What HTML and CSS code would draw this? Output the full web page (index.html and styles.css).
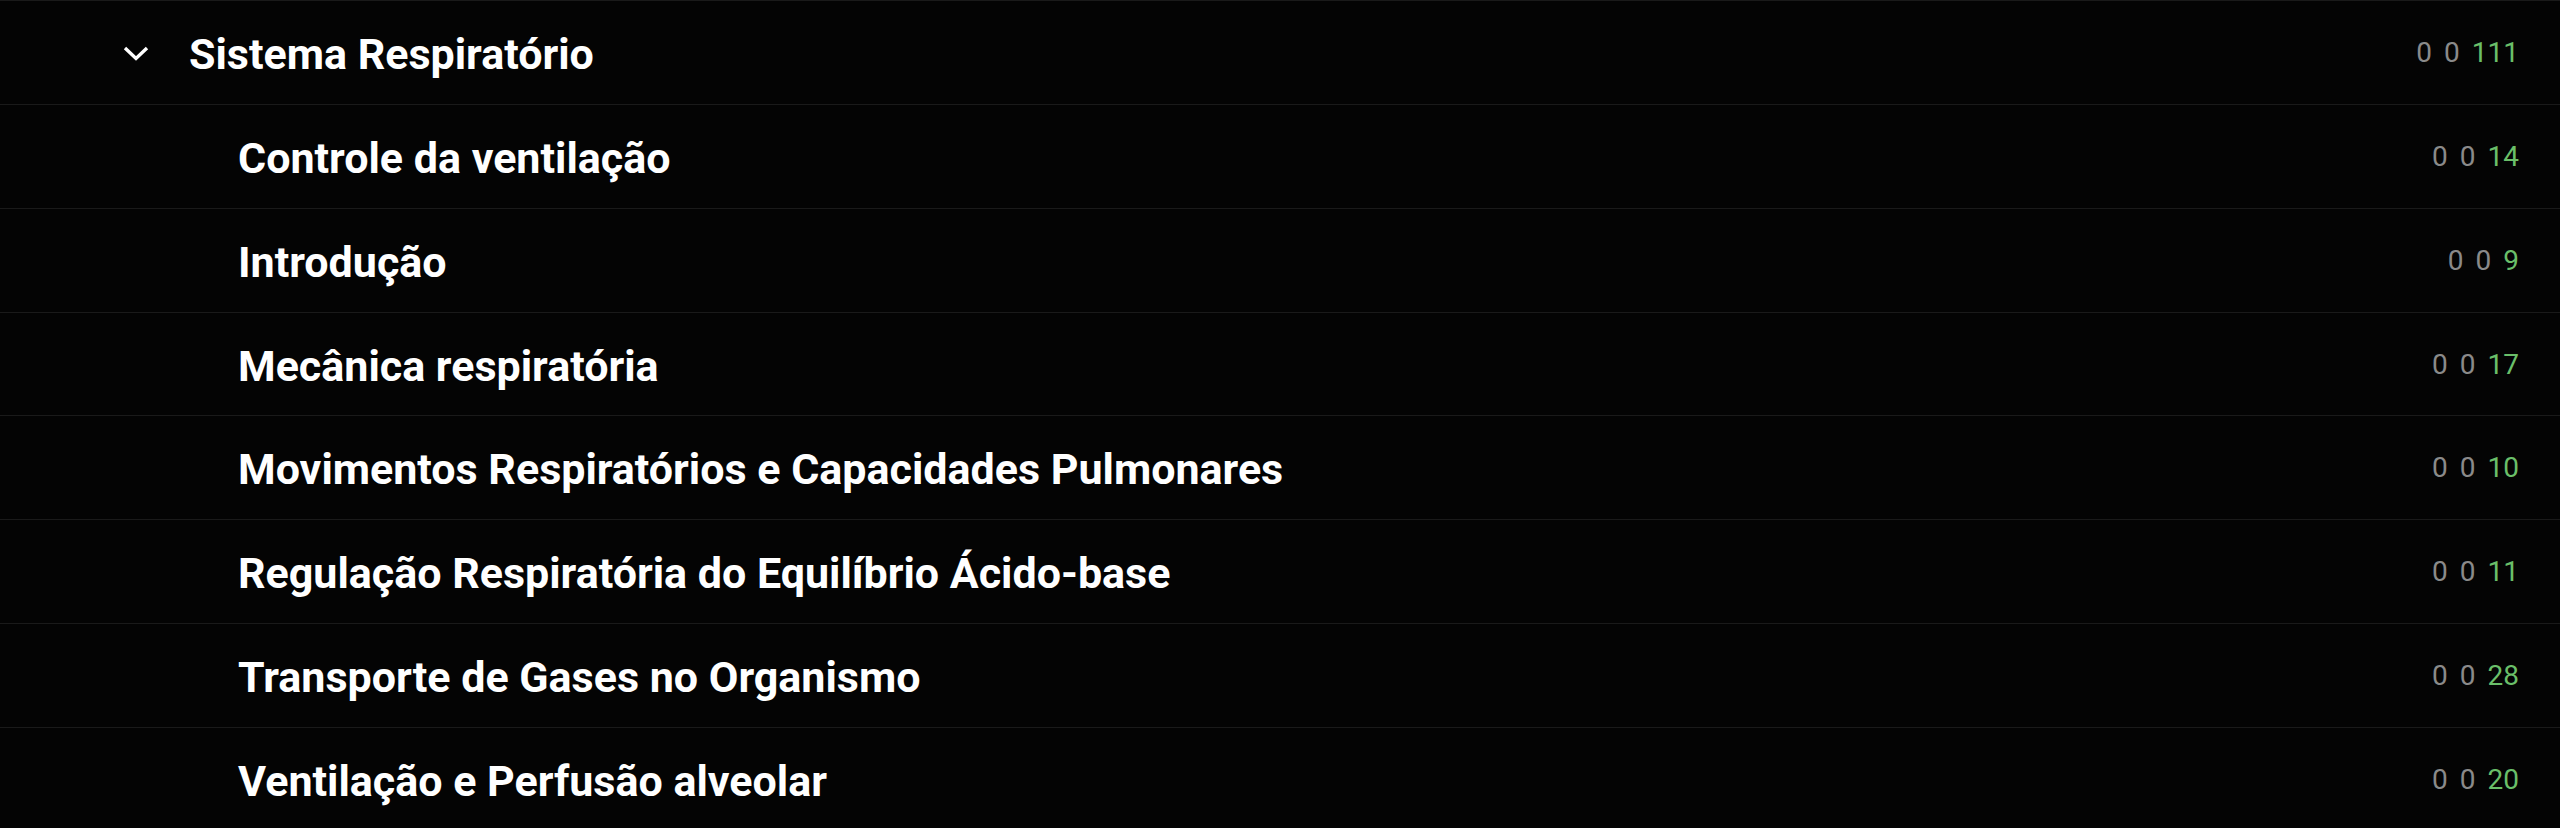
FILE: index.html
```html
<!DOCTYPE html>
<html lang="pt">

<head>
  <meta charset="UTF-8">
  <meta name="viewport" content="width=device-width, initial-scale=1.0">
  <title>Sistema Respiratório</title>
  <link rel="stylesheet" href="styles.css">
</head>

<body>
  <ul class="tree">
    <li class="row row-group">
      <span class="toggle">
        <svg width="26" height="15" viewBox="0 0 26 15">
          <polyline points="2,2 13,12.5 24,2" fill="none" stroke="#fff" stroke-width="3.4" />
        </svg>
      </span>
      <span class="title">Sistema Respiratório</span>
      <span class="counts"><span>0</span><span>0</span><span class="done">111</span></span>
    </li>
    <li class="row row-child">
      <span class="title">Controle da ventilação</span>
      <span class="counts"><span>0</span><span>0</span><span class="done">14</span></span>
    </li>
    <li class="row row-child">
      <span class="title">Introdução</span>
      <span class="counts"><span>0</span><span>0</span><span class="done">9</span></span>
    </li>
    <li class="row row-child">
      <span class="title">Mecânica respiratória</span>
      <span class="counts"><span>0</span><span>0</span><span class="done">17</span></span>
    </li>
    <li class="row row-child">
      <span class="title">Movimentos Respiratórios e Capacidades Pulmonares</span>
      <span class="counts"><span>0</span><span>0</span><span class="done">10</span></span>
    </li>
    <li class="row row-child">
      <span class="title">Regulação Respiratória do Equilíbrio Ácido-base</span>
      <span class="counts"><span>0</span><span>0</span><span class="done">11</span></span>
    </li>
    <li class="row row-child">
      <span class="title">Transporte de Gases no Organismo</span>
      <span class="counts"><span>0</span><span>0</span><span class="done">28</span></span>
    </li>
    <li class="row row-child">
      <span class="title">Ventilação e Perfusão alveolar</span>
      <span class="counts"><span>0</span><span>0</span><span class="done">20</span></span>
    </li>
  </ul>
</body>

</html>
```

FILE: styles.css
```css
body {
  margin: 0;
  background: #000;
  font-family: Roboto, "Liberation Sans", sans-serif;
  color: #fff;
  overflow: hidden;
}

.tree {
  list-style: none;
  margin: 0;
  padding: 0;
}

.row {
  display: flex;
  align-items: center;
  height: 102.86px;
  border-top: 1px solid #1a1a1a;
  background: #040404;
  padding-right: 41px;
}

.row-group {
  padding-left: 123px;
}

.row-child {
  padding-left: 238px;
}

.toggle {
  display: flex;
  width: 26px;
  height: 15px;
  margin-right: 40px;
  margin-top: 2px;
}

.title {
  font-size: 43px;
  font-weight: 700;
  flex: 1;
  white-space: nowrap;
  margin-top: 3px;
}

.counts {
  display: flex;
  gap: 12px;
  font-size: 28px;
  color: #8a8a8a;
}

.done {
  color: #6abf69;
}
```
